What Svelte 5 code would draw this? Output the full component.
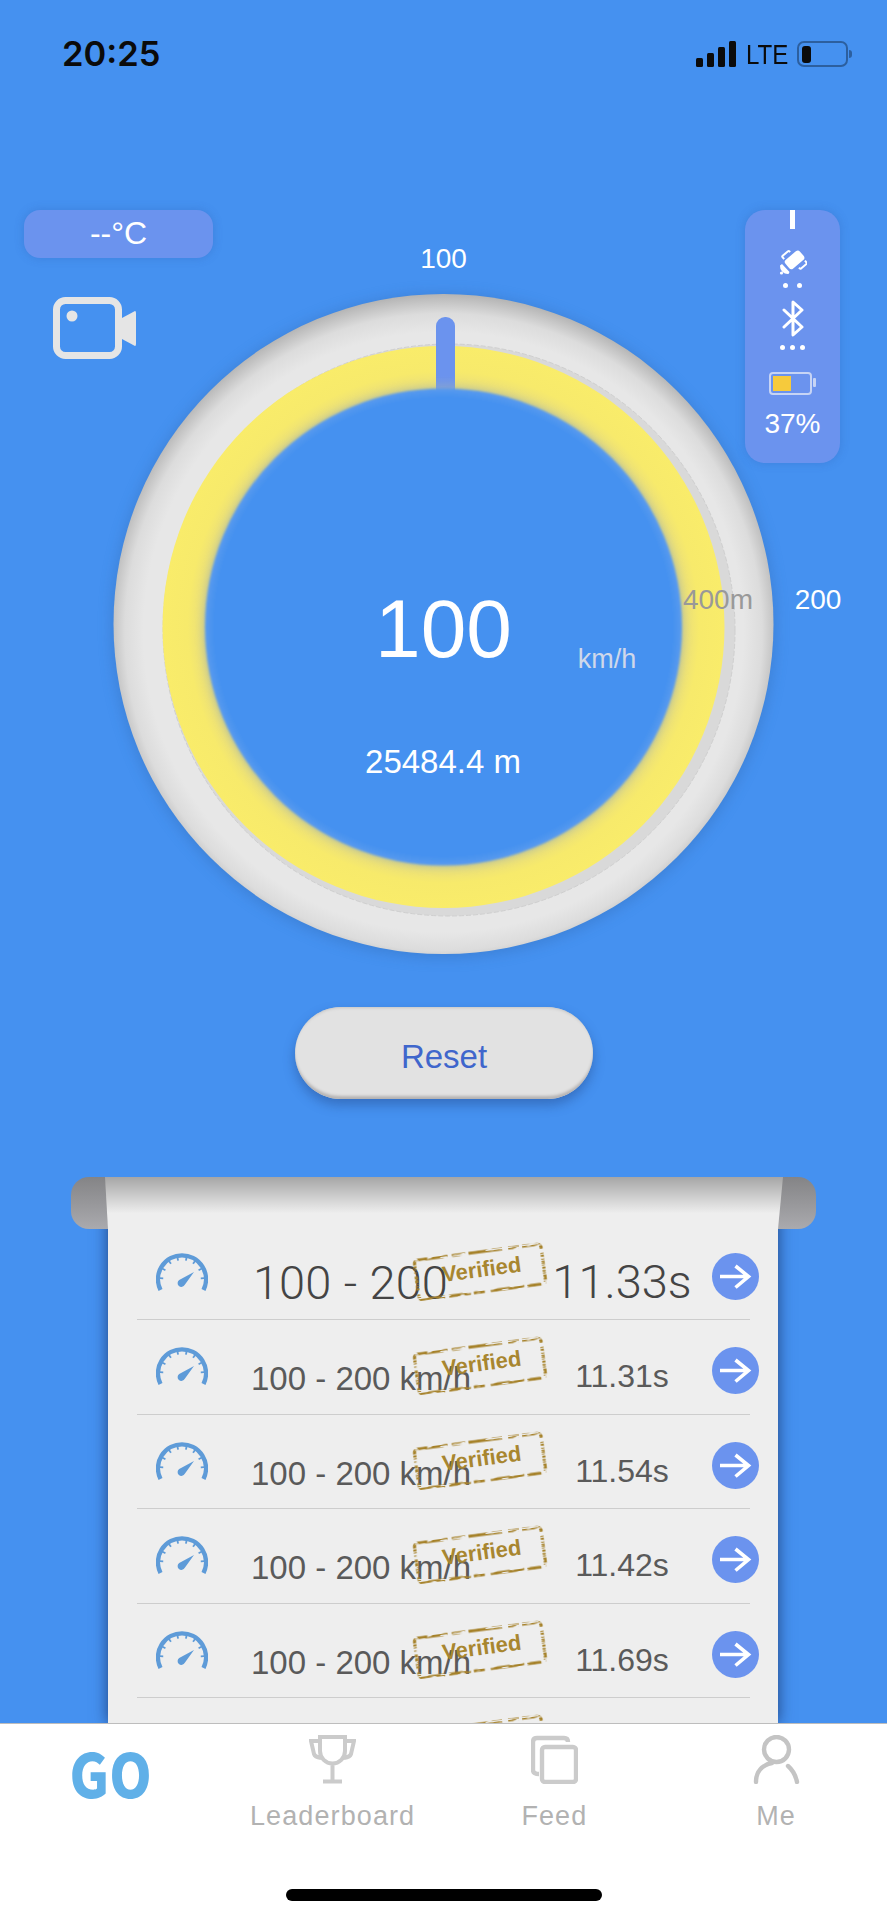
<script>
  // last row only peeks out from under the tab bar, nothing but its stamp shows
  const times = ["11.33s", "11.31s", "11.54s", "11.42s", "11.69s", null];
  const ticks = [-88, -62, -36, -12, 12, 36, 62, 88];
</script>

<svg class="defs" width="0" height="0" aria-hidden="true">
  <defs>
    <filter id="rough" x="-5%" y="-10%" width="110%" height="120%">
      <feTurbulence type="fractalNoise" baseFrequency="0.07 0.7" numOctaves="2" seed="7" result="n" />
      <feColorMatrix in="n" type="matrix" values="0 0 0 0 0  0 0 0 0 0  0 0 0 0 0  0 0 0 -11 6.6" result="m" />
      <feComposite in="SourceGraphic" in2="m" operator="in" />
    </filter>
  </defs>
</svg>

<div class="page">
  <header class="status">
    <span class="clock">20:25</span>
    <div class="status-right">
      <div class="signal"><i></i><i></i><i></i><i></i></div>
      <span class="lte">LTE</span>
      <div class="phone-batt"><i></i></div>
    </div>
  </header>

  <section class="stage">
    <svg class="dial" viewBox="0 100 887 907" width="887" height="907">
      <defs>
        <radialGradient id="rim" gradientUnits="userSpaceOnUse" cx="443.5" cy="632" r="339">
          <stop offset="0.885" stop-color="#e7e7e7" />
          <stop offset="0.94" stop-color="#dcdcdc" />
          <stop offset="1" stop-color="#b2b2b2" />
        </radialGradient>
        <radialGradient id="yellow" gradientUnits="userSpaceOnUse" cx="443.5" cy="627" r="281">
          <stop offset="0.85" stop-color="#e8dd7c" />
          <stop offset="0.91" stop-color="#f7ea6b" />
          <stop offset="1" stop-color="#f9ec6a" />
        </radialGradient>
        <radialGradient id="face" gradientUnits="userSpaceOnUse" cx="443.5" cy="627" r="239">
          <stop offset="0.96" stop-color="#4591f0" />
          <stop offset="1" stop-color="#5a9bee" />
        </radialGradient>
        <linearGradient id="mark" x1="0" y1="0" x2="0" y2="1">
          <stop offset="0.7" stop-color="#6b93ee" />
          <stop offset="1" stop-color="#8ba6d4" />
        </linearGradient>
        <filter id="soft" x="-10%" y="-10%" width="120%" height="120%">
          <feGaussianBlur stdDeviation="7" />
        </filter>
        <filter id="glow" x="-10%" y="-10%" width="120%" height="120%">
          <feGaussianBlur stdDeviation="4" />
        </filter>
        <filter id="edge" x="-5%" y="-5%" width="110%" height="110%">
          <feGaussianBlur stdDeviation="0.800" />
        </filter>
      </defs>
      <circle cx="443.5" cy="626" r="332" fill="#2f63a8" opacity="0.35" filter="url(#soft)" />
      <circle cx="443.5" cy="624" r="330" fill="url(#rim)" />
      <circle cx="449" cy="630" r="286" fill="#d9d9d9" stroke="#cfcfcf" stroke-width="1" stroke-dasharray="5 2" />
      <circle cx="443.5" cy="627" r="281" fill="url(#yellow)" />
      <rect x="436" y="317" width="19" height="84" rx="9" fill="url(#mark)" />
      <circle cx="443.5" cy="627" r="240" fill="#8aa6b8" opacity="0.5" filter="url(#glow)" />
      <circle cx="443.5" cy="627" r="238.500" fill="url(#face)" filter="url(#edge)" />
    </svg>

    <div class="temp">--°C</div>

    <svg class="camera" viewBox="0 0 84 62" width="84" height="62">
      <rect x="3.500" y="3.500" width="62" height="55" rx="9" fill="none" stroke="#e5e5e5" stroke-width="7" />
      <circle cx="19" cy="19" r="5.500" fill="#e5e5e5" />
      <path d="M69 21 L82 14 Q83 14 83 16 V47 Q83 49 82 49 L69 42 Z" fill="#e5e5e5" />
    </svg>

    <aside class="sensors">
      <i class="tick"></i>
      <svg class="sat" viewBox="0 0 28 28" width="28" height="28">
        <g transform="rotate(-40 15 13)">
          <rect x="6" y="7.500" width="19" height="11.500" rx="3" fill="#fff" />
          <path d="M8 6 V3.500 Q8 2.500 9 2.500 H16 Q17 2.500 17 3.500 V4.500" stroke="#fff" stroke-width="2" fill="none" />
          <path d="M23 20.500 V23 Q23 24 22 24 H15 Q14 24 14 23 V22" stroke="#fff" stroke-width="2" fill="none" />
        </g>
        <path d="M1 18.500 A8 8 0 0 0 9.500 27 L10.500 25 L3 17 Z" fill="#fff" />
        <circle cx="2.500" cy="26" r="1.600" fill="#fff" />
      </svg>
      <div class="dots two"><i></i><i></i></div>
      <svg class="bt" viewBox="0 0 22 37" width="22" height="37">
        <path d="M2 10 L20 27 L11 35 V2 L20 10 L2 27" fill="none" stroke="#fff" stroke-width="3" stroke-linejoin="round" stroke-linecap="round" />
      </svg>
      <div class="dots three"><i></i><i></i><i></i></div>
      <div class="batt"><i></i></div>
      <span class="pct">37%</span>
    </aside>

    <span class="label top">100</span>
    <span class="label right">200</span>
    <span class="label dist">400m</span>
    <span class="speed">100</span>
    <span class="unit">km/h</span>
    <span class="total">25484.4 m</span>
  </section>

  <button class="reset">Reset</button>

  <section class="scroll">
    <div class="sheet">
      {#each times as time, i}
        <div class="row" class:big={i === 0}>
          {#if time}
            <svg class="gauge" viewBox="-26 -26 52 38" width="52" height="38">
              <path d="M-21.500 11 A24 24 0 1 1 21.500 11" fill="none" stroke="#5e9bd8" stroke-width="4.400" />
              {#each ticks as a}
                <line x1="0" y1="-22.500" x2="0" y2="-18.800" stroke="#5e9bd8" stroke-width="1.800" transform="rotate({a})" />
              {/each}
              <path d="M12 -7 L2.800 5.800 A3.800 3.800 0 1 1 -2.800 1 Z" fill="#5e9bd8" />
            </svg>
            <span class="what">{i === 0 ? "100 - 200" : "100 - 200 km/h"}</span>
            <span class="time">{time}</span>
            <svg class="go" viewBox="0 0 47 47" width="47" height="47">
              <circle cx="23.500" cy="23.500" r="23.500" fill="#6b93ee" />
              <path d="M8 23.500 H36 M23.500 13 L36.500 23.500 L23.500 34.500" fill="none" stroke="#fff" stroke-width="3.600" />
            </svg>
          {/if}
          <div class="stamp">
            <svg viewBox="0 0 132 44" width="132" height="44">
              <rect x="2" y="2" width="128" height="40" rx="4" fill="none" stroke="#a6822a" stroke-width="3.200"
                stroke-dasharray="30 4 14 3 34 6 11 3 22 4" filter="url(#rough)" />
            </svg>
            {#if time}<span>Verified</span>{/if}
          </div>
        </div>
      {/each}
    </div>
    <div class="roll"></div>
    <div class="curl"></div>
  </section>

  <nav class="tabs">
    <div class="tab"><span class="go-mark">GO</span></div>
    <div class="tab">
      <svg viewBox="0 0 47 49" width="47" height="49">
        <path d="M11 2 H36 V16 A12.500 12.500 0 0 1 11 16 Z M11 6 H2 L5 19 Q6 22 12 23 M36 6 H45 L42 19 Q41 22 35 23 M23.500 29 V46 M14 46.500 H33"
          fill="none" stroke="#cbcbcb" stroke-width="4" />
      </svg>
      <span>Leaderboard</span>
    </div>
    <div class="tab">
      <svg viewBox="0 0 47 49" width="47" height="49">
        <path d="M8 39 Q2 39 2 35 V7 Q2 3 6 3 H33 Q37 3 37 7" fill="none" stroke="#cbcbcb" stroke-width="4.400" />
        <rect x="11" y="12" width="34" height="35" rx="3" fill="none" stroke="#cbcbcb" stroke-width="4.400" />
      </svg>
      <span>Feed</span>
    </div>
    <div class="tab">
      <svg viewBox="0 0 47 49" width="47" height="49">
        <circle cx="23.500" cy="14.500" r="12.500" fill="none" stroke="#c4c4c4" stroke-width="4.400" />
        <path d="M3 47 C3 37 9 30 19 28 M35 31 Q42 37 44 47" fill="none" stroke="#c4c4c4" stroke-width="4.400" stroke-linecap="round" />
      </svg>
      <span>Me</span>
    </div>
    <i class="home"></i>
  </nav>
</div>

<style>
  :global(body) {
    background: #4591f0;
  }

  .defs {
    position: absolute;
  }

  .page {
    width: 887px;
    height: 1920px;
    overflow: hidden;
    background: #4591f0;
    font-family: "Liberation Sans", Arial, sans-serif;
    color: #fff;
  }

  /* status bar */
  .status {
    height: 100px;
    display: flex;
    justify-content: space-between;
    padding: 34px 39px 0 62px;
    box-sizing: border-box;
    color: #0b0b0b;
  }

  .clock {
    font: 600 34.500px/40px Inter, sans-serif;
  }

  .status-right {
    display: flex;
    align-items: flex-start;
    padding-top: 7px;
  }

  .signal {
    display: flex;
    align-items: flex-end;
    gap: 4px;
    height: 26px;
  }

  .signal i {
    width: 7px;
    border-radius: 1.500px;
    background: #0b0b0b;
  }

  .signal i:nth-child(1) { height: 9px; }
  .signal i:nth-child(2) { height: 14px; }
  .signal i:nth-child(3) { height: 20px; }
  .signal i:nth-child(4) { height: 26px; }

  .lte {
    width: 40px;
    margin-left: 10px;
    font-size: 28px;
    line-height: 28px;
    transform: scaleX(0.86);
    transform-origin: left;
  }

  .phone-batt {
    position: relative;
    width: 51px;
    height: 26px;
    margin-left: 11px;
    box-sizing: border-box;
    border: 2px solid #2c5f9f;
    border-radius: 7px;
  }

  .phone-batt::after {
    content: "";
    position: absolute;
    left: 50px;
    top: 7px;
    width: 3px;
    height: 8px;
    border-radius: 0 4px 4px 0;
    background: #2c5f9f;
  }

  .phone-batt i {
    display: block;
    width: 9px;
    height: 17px;
    margin: 2.500px 0 0 2.500px;
    border-radius: 3px;
    background: #0b0b0b;
  }

  /* dial */
  .stage {
    position: relative;
    height: 907px;
  }

  .dial {
    display: block;
  }

  .temp {
    position: absolute;
    left: 24px;
    top: 110px;
    width: 189px;
    height: 48px;
    border-radius: 16px;
    background: #6b93ee;
    box-shadow: 0 0 10px rgba(40, 80, 160, 0.25);
    font-size: 32px;
    line-height: 46px;
    text-align: center;
  }

  .camera {
    position: absolute;
    left: 53px;
    top: 197px;
  }

  .sensors {
    position: absolute;
    left: 745px;
    top: 110px;
    width: 95px;
    height: 253px;
    border-radius: 20px;
    background: #6b93ee;
    box-shadow: 0 0 10px rgba(40, 80, 160, 0.25);
    display: flex;
    flex-direction: column;
    align-items: center;
  }

  .tick {
    width: 5px;
    height: 19px;
    background: #fff;
  }

  .sat {
    margin-top: 18px;
  }

  .dots {
    display: flex;
    margin-top: 8px;
  }

  .dots i {
    width: 5px;
    height: 5px;
    border-radius: 50%;
    background: #fff;
  }

  .dots.two { gap: 9px; }
  .dots.three { gap: 5px; }

  .bt {
    margin-top: 12px;
  }

  .batt {
    position: relative;
    width: 43px;
    height: 23px;
    margin-top: 22px;
    margin-left: -4px;
    box-sizing: border-box;
    border: 2px solid #c6d4f5;
    border-radius: 4px;
    padding: 2px;
  }

  .batt::after {
    content: "";
    position: absolute;
    left: 42px;
    top: 4px;
    width: 3px;
    height: 9px;
    border-radius: 1px;
    background: #c6d4f5;
  }

  .batt i {
    display: block;
    width: 18px;
    height: 100%;
    background: #f6ca3c;
  }

  .pct {
    margin-top: 13px;
    font-size: 28px;
    line-height: 32px;
  }

  .label,
  .speed,
  .unit,
  .total {
    position: absolute;
    transform: translateX(-50%);
    white-space: nowrap;
  }

  .label {
    font-size: 28px;
    line-height: 30px;
  }

  .label.top { left: 443.500px; top: 144px; }
  .label.right { left: 818px; top: 485px; }
  .label.dist { left: 718px; top: 485px; color: #999; }

  .speed {
    left: 443.500px;
    top: 484px;
    font-size: 82px;
    line-height: 90px;
  }

  .unit {
    left: 607px;
    top: 544px;
    font-size: 27px;
    line-height: 30px;
    color: #cfd8ea;
  }

  .total {
    left: 443px;
    top: 645px;
    font-size: 33px;
    line-height: 34px;
  }

  .reset {
    display: block;
    width: 298px;
    height: 92px;
    margin: 0 0 78px 295px;
    padding: 8px 0 0;
    border: 0;
    border-radius: 46px;
    background: #e2e2e2;
    box-shadow: inset 0 -4px 3px -1px #b5b3b3, inset 0 3px 3px -2px #c4c4c4, 0 6px 12px rgba(30, 60, 120, 0.4);
    font: 33px "Liberation Sans", Arial, sans-serif;
    color: #3f66cc;
  }

  /* paper scroll */
  .scroll {
    position: relative;
    height: 546px;
    overflow: hidden;
  }

  .sheet {
    width: 670px;
    height: 546px;
    margin-left: 108px;
    padding-top: 48.500px;
    box-sizing: border-box;
    overflow: hidden;
    background: #eee;
    color: #5a5a5a;
    box-shadow: 0 0 14px rgba(20, 40, 90, 0.75);
  }

  .roll {
    position: absolute;
    left: 71px;
    top: 0;
    width: 745px;
    height: 52px;
    border-radius: 18px;
    background: linear-gradient(#848486, #aaaaae);
  }

  .curl {
    position: absolute;
    left: 105px;
    top: 0;
    width: 678px;
    height: 52px;
    background: linear-gradient(#a6a6a6, #dadada 50%, #eee 70%);
    clip-path: polygon(0 0, 100% 0, calc(100% - 5px) 100%, 3px 100%);
  }

  .row {
    position: relative;
    height: 94.500px;
    display: grid;
    grid-template-columns: 143px 291px 160px 10px 47px;
    align-items: start;
  }

  .row::after {
    content: "";
    position: absolute;
    left: 29px;
    right: 28px;
    bottom: 0;
    height: 1px;
    background: #cdcdcd;
  }

  .gauge {
    margin: 27px 0 0 48px;
  }

  .what,
  .time {
    font-size: 33px;
    line-height: 36px;
    padding-top: 41px;
    white-space: nowrap;
  }

  .time {
    font-size: 32px;
    padding-top: 38px;
    text-align: center;
    grid-column: 3;
  }

  .row.big .what,
  .row.big .time {
    font: 300 47px/50px Roboto, sans-serif;
    color: #444;
    padding-top: 32px;
  }

  .row.big .what {
    padding-left: 2px;
    word-spacing: 1px;
  }

  .row.big .time {
    padding-top: 31px;
  }

  .go {
    grid-column: 5;
    margin-top: 27px;
  }

  .stamp {
    position: absolute;
    left: 306px;
    top: 24px;
    width: 132px;
    height: 44px;
    transform: rotate(-7.500deg);
    color: #a8862f;
  }

  .stamp svg {
    display: block;
  }

  .stamp span {
    position: absolute;
    left: 4px;
    right: 0;
    top: 6px;
    text-align: center;
    font: bold 22px/28px "Liberation Sans", Arial, sans-serif;
  }

  /* tab bar */
  .tabs {
    position: relative;
    height: 197px;
    box-sizing: border-box;
    padding-top: 11px;
    border-top: 1px solid #bdbdbd;
    background: #fff;
    display: grid;
    grid-template-columns: repeat(4, 1fr);
    align-items: start;
  }

  .tab {
    display: flex;
    flex-direction: column;
    align-items: center;
    color: #b2b2b2;
    font-size: 27px;
    line-height: 32px;
    letter-spacing: 1.100px;
  }

  .tab svg {
    display: block;
    margin-bottom: 16px;
  }

  .go-mark {
    margin-top: 1px;
    font: 900 60px/72px "Noto Sans CJK JP", "Noto Sans", sans-serif;
    letter-spacing: 0;
    color: #60b0e8;
    transform: scaleX(0.9);
  }

  .home {
    position: absolute;
    left: 286px;
    top: 165px;
    width: 316px;
    height: 12px;
    border-radius: 6px;
    background: #000;
  }
</style>
